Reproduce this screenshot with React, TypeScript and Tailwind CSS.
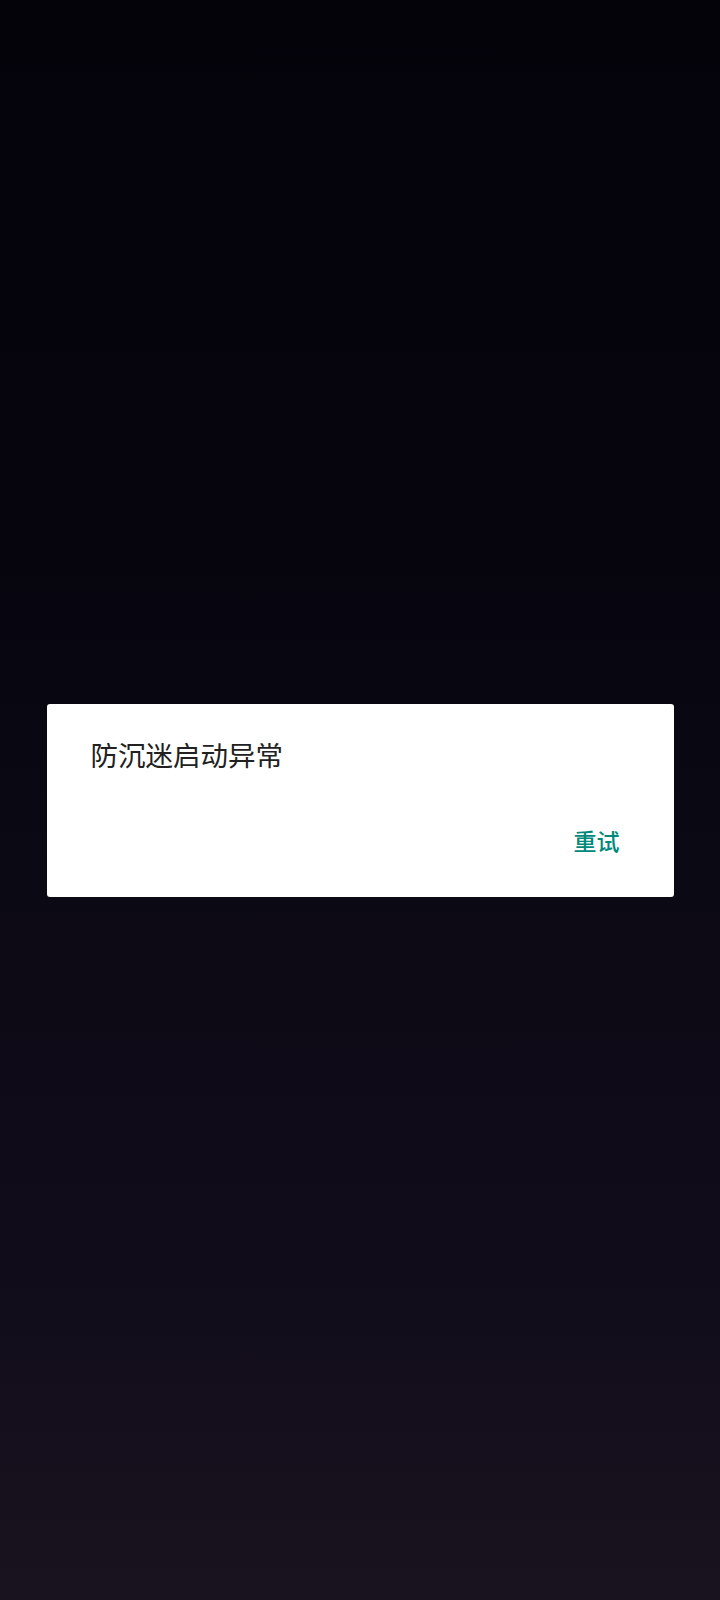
export default function App() {
  return (
    <div className="w-[720px] h-[1600px] bg-[linear-gradient(180deg,#04030a_0%,#06050e_35%,#0b0914_55%,#110c1a_80%,#19131f_100%)] flex items-center justify-center font-['Noto_Sans_CJK_SC','Noto_Sans',sans-serif]">
      <div className="w-[627px] h-[193px] bg-white rounded-[3px] pt-[34px] pl-[44px] pr-[54px] flex flex-col">
        <div className="text-[27.5px] leading-[33px] text-[#212121]">防沉迷启动异常</div>
        <div className="mt-[55px] flex justify-end">
          <button className="text-[23px] leading-[28px] font-medium text-[#00897b]">重试</button>
        </div>
      </div>
    </div>
  );
}
